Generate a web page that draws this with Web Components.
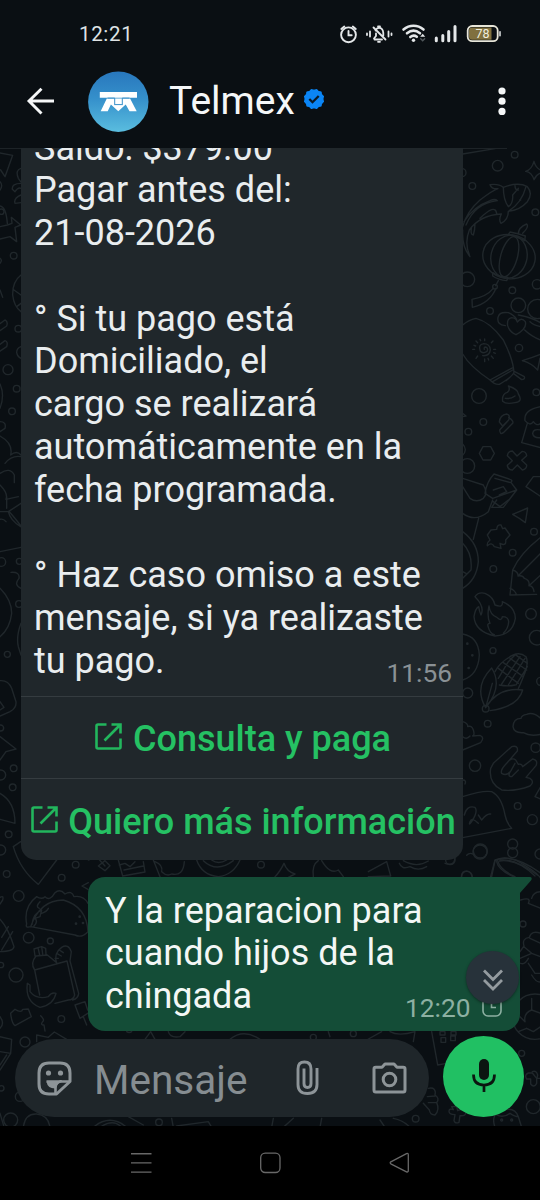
<!DOCTYPE html>
<html lang="es">
<head>
<meta charset="utf-8">
<title>Telmex</title>
<style>
html,body{margin:0;background:#000}
body{font-family:Roboto,"Noto Sans",sans-serif;color:#eceff1}
</style>
</head>
<body>
<phone-screen></phone-screen>
<script>
const define = (name, html) => {
  const t = document.createElement('template');
  t.innerHTML = html;
  customElements.define(name, class extends HTMLElement {
    constructor() {
      super();
      this.attachShadow({ mode: 'open' }).appendChild(t.content.cloneNode(true));
    }
  });
};

define('status-bar', `
<style>
:host{display:flex;align-items:center;justify-content:space-between;box-sizing:border-box;height:54px;padding:13px 37px 0 79px;color:#dfe3e5}
time{font-size:20.5px;letter-spacing:.65px;line-height:24px}
svg{display:block;width:164px;height:24px}
</style>
<time>12:21</time>
<svg viewBox="340 22 164 24" fill="none" stroke="#e4e7e9" stroke-width="1.900" stroke-linecap="round">
  <circle cx="349.500" cy="34.8" r="7.4"/><path d="M349.500 31v4.3h3.2M342.3 29l3-2.5M353.8 26.5l3 2.5"/>
  <path d="M375.5 39.5h7.5M375 38.5l2-2.5v-2.5M376.5 30.5c1-2 2-2.7 3.5-2.7 2.5 0 4 2 4.300 5v3M374.500 27.500l12 12M379 26.500h2M379 41.800h2M371 31.500v5M368 33.500v1.500M389.500 31.500v5M392.500 33.500v1.500" stroke-width="1.800"/>
  <path d="M404.500 29.500c6-5 14-5 20 0M408 33.300c4-3.200 9-3.200 13 0M411.300 37c2.200-1.700 4.600-1.700 6.500-.2" stroke-width="2.600"/>
  <circle cx="414.500" cy="40.200" r="1.700" fill="#e4e7e9" stroke="none"/>
  <path d="M421.200 36.800l2.500-3 2.500 3z" fill="#e4e7e9" stroke="none"/><path d="M421.700 38.700l2 2 2-2" stroke="#50575b" stroke-width="1.400"/>
  <path d="M437.300 38v2.700M443.800 35.500v5.200M449.700 31.500v9.200M456 26.500v14.200" stroke-width="3"/>
  <rect x="468.700" y="26" width="30" height="15.200" rx="4.500" fill="#0b1014" stroke="#e7e5d8" stroke-width="1.800"/>
  <path d="M473 27.500h19.500v12.200H473q-3 0-3-3v-6.200q0-3 3-3z" fill="#80703f" stroke="none"/>
  <path d="M501 31.700v4" stroke-width="1.500"/>
  <text x="483.500" y="38" font-family="Roboto,sans-serif" font-size="12.500" text-anchor="middle" fill="#f2efdf" stroke="none">78</text>
</svg>`);

define('chat-header', `
<style>
:host{display:flex;align-items:center;box-sizing:border-box;height:94px;padding:0 33.700px 0 26px}
svg{display:block;flex:none}
.avatar{margin-left:33px}
h1{margin:0 0 0 20px;font-size:39px;line-height:44px;font-weight:400;color:#f5f7f8}
.badge{margin:-4px 0 0 8px}
.menu{margin-left:auto}
</style>
<svg width="29" height="30" viewBox="26 86 29 30" fill="none" stroke="#f5f7f8" stroke-width="2.900"><path d="M54 101H29M41.500 88.700L29 101l12.500 12.500"/></svg>
<svg class="avatar" width="61" height="61" viewBox="88 71 61 61">
  <defs><linearGradient id="g" x1="0" y1="0" x2="0" y2="1"><stop offset="0" stop-color="#2877bd"/><stop offset=".45" stop-color="#3590cb"/><stop offset="1" stop-color="#5abddf"/></linearGradient></defs>
  <circle cx="118.300" cy="101.700" r="30.200" fill="url(#g)"/>
  <g fill="#fff"><path d="M99.800 92h37.200v5.700H99.800z"/>
  <path d="M106.800 98.600h23.300L136.700 111.300h-7.200l-3.800-6.800-7.400 6.800-7.400-6.800-3.200 6.800h-7z"/></g>
  <path d="M107.500 98.100h7.200v6.200M129.500 98.100h-7.200v6.200M114.200 104.600h8.600" fill="none" stroke="#3990c9" stroke-width="1"/>
</svg>
<h1>Telmex</h1>
<svg class="badge" width="22" height="22" viewBox="-11 -11 22 22"><g fill="#0b85f5"><circle r="9.600"/><rect x="-7.700" y="-7.700" width="15.400" height="15.400" rx="1.300"/><rect x="-7.700" y="-7.700" width="15.400" height="15.400" rx="1.300" transform="rotate(30)"/><rect x="-7.700" y="-7.700" width="15.400" height="15.400" rx="1.300" transform="rotate(60)"/></g><path d="M-4.700 0l3.200 3.200L4.700-3" fill="none" stroke="#0b1a27" stroke-width="2.300"/></svg>
<svg class="menu" width="8" height="30" viewBox="0 0 8 30" fill="#f5f7f8"><circle cx="4" cy="5" r="3.600"/><circle cx="4" cy="15.200" r="3.600"/><circle cx="4" cy="25.400" r="3.600"/></svg>`);

define('doodle-wallpaper', `
<style>:host{display:block}svg{display:block;width:540px;height:978px}</style>
<svg viewBox="0 148 540 978" fill="none" stroke="#20272b" stroke-width="4.200" stroke-linejoin="round" stroke-linecap="round">
<g transform="translate(440 140) scale(.33333)">
  <path d="M68 42L165 26"/><circle cx="224" cy="44" r="10"/><circle cx="173" cy="77" r="16"/><circle cx="97" cy="138" r="10"/><circle cx="66" cy="98" r="12"/>
  <path d="M257 94q18-5 25-30q6 23 25 28M257 94q18 2 25 25q6-17 25-22"/><circle cx="286" cy="217" r="10"/>
  <path d="M68 260Q80 215 120 180Q160 150 174 146Q155 148 150 134Q175 130 190 142Q235 125 262 140Q280 160 262 185Q240 210 205 214Q205 240 183 250Q175 240 184 222Q120 225 88 270Q72 310 90 350Q65 320 68 270M190 142Q190 180 205 200Q220 190 218 165L235 145M72 245Q100 200 150 182Q165 175 172 182Q105 190 78 255M95 260Q90 285 100 285Q105 270 105 250M120 235Q165 190 170 220M225 137Q225 150 235 150M258 140Q245 190 205 214"/><circle cx="241" cy="180" r="1"/>
  <ellipse cx="207" cy="350" rx="79" ry="66" transform="rotate(10 207 350)"/><ellipse cx="207" cy="350" rx="54" ry="65" transform="rotate(14 207 350)"/><ellipse cx="207" cy="350" rx="25" ry="62" transform="rotate(16 207 350)"/>
  <path d="M205 284Q230 290 254 302L256 288Q235 280 210 276ZM235 282Q235 262 260 252Q268 260 248 280M158 398Q180 412 204 412L200 422Q175 420 158 408ZM175 422L167 437M160 445Q140 470 96 478L97 502Q150 490 168 445"/><circle cx="165" cy="440" r="7"/>
  <circle cx="82" cy="418" r="22"/><circle cx="291" cy="433" r="14"/><circle cx="217" cy="451" r="10"/><circle cx="235" cy="496" r="22"/><circle cx="292" cy="507" r="29"/><circle cx="150" cy="513" r="10"/>
  <path d="M196 557Q170 555 174 532Q178 514 205 518Q222 525 230 538M228 584Q208 575 203 557Q200 535 215 533Q228 534 232 546Q244 530 256 545Q262 565 228 584M235 525Q285 535 304 550M254 570Q275 590 302 600M302 560Q280 555 270 545"/>
  <path d="M68 555Q85 540 108 535Q150 545 190 600Q215 650 220 682L150 720Q90 680 68 642M150 720Q165 735 178 733Q220 708 222 696L220 682M158 725L218 690M198 722L210 712M220 700L245 719Q256 718 253 710L224 695"/>
  <path d="M133 628q-2-7 4-7q9 4 4 13q-12 8-20 0q-8-20 10-23q18 0 20 18q-2 20-23 18"/><path d="M134 602v-5M134 657v8M104 628h-6M161 628h6M113 608l-5-5M154 608l5-5M113 648l-5 7M154 648l6 7M107 618l-5-2M161 638l5 2M122 602l-2-4M144 655l2 5"/>
  <circle cx="237" cy="624" r="11"/><path d="M247 662Q275 654 302 643M247 662Q275 670 293 690L300 655"/>
  <circle cx="117" cy="768" r="22"/><circle cx="289" cy="757" r="10"/><path d="M188 784Q185 762 202 757Q212 750 205 738Q235 748 235 762Q250 785 225 788Q198 794 188 784M196 775Q212 778 225 768"/>
  <circle cx="130" cy="846" r="10"/><circle cx="85" cy="875" r="10"/><path d="M178 846Q180 825 200 822Q212 825 206 840L188 858L178 846M206 832Q222 843 218 850L190 878Q180 886 179 870L204 842"/>
  <path d="M129 920h23l11 20-11 20h-23l-11-20z"/><path d="M231 948l16-14q12 1 13 13l-15 14 15 14q1 12-13 15l-15-15-15 15q-14-1-15-14l15-14-15-15q2-14 15-14z"/>
  <path d="M302 800Q250 810 255 842Q270 860 280 845Q290 860 302 850M262 850L245 908L302 923M302 870Q280 865 278 880Q280 895 302 893M65 818L78 828L68 830"/>
  <circle cx="82" cy="978" r="22"/><path d="M66 910q20 20 0 38M68 1015L130 1035Q145 1060 130 1075Q110 1090 90 1075L68 1040M162 1002Q140 1025 135 1060L158 1075L230 1050M162 1002L210 1018Q220 1020 212 1028L165 1015M215 1030L230 1050L190 1102H155L170 1080M160 1050L190 1040L200 1055L178 1065M258 1040L280 1010L300 1010M258 1040L300 1068"/>
</g>
<g transform="translate(440 500) scale(.33333)">
  <path d="M68 40Q105 68 145 35L158 0M160 5L180 20L205 0M116 55L100 118M68 95Q115 130 115 185Q110 240 68 265M68 130Q98 160 93 210L68 235M68 215L78 220"/>
  <path d="M218 43L263 24L256 68Q240 55 218 43"/><circle cx="282" cy="95" r="10"/><circle cx="218" cy="158" r="10"/><circle cx="160" cy="207" r="10"/>
  <path d="M153 90L170 88Q172 72 183 75L188 86L195 84L210 105L197 120Q200 140 180 130L183 145L163 140Q155 125 142 137Q140 128 150 120L142 105z"/>
  <path d="M218 210Q240 160 302 112M218 210L210 285L290 283M218 210Q235 215 234 228Q248 225 253 235Q270 240 267 257Q280 258 282 275M234 228L302 160M267 257L302 225M210 265Q225 270 230 285"/>
  <path d="M105 290Q115 275 135 280Q160 290 165 315Q190 325 187 305Q225 320 226 355Q218 405 165 408Q105 395 102 350Q106 325 116 320Q118 335 123 345Q135 320 105 290M147 318Q150 345 172 353Q185 365 187 350Q205 350 206 365Q205 385 190 400M147 318Q140 350 150 370Q140 370 145 382Q150 400 163 404"/>
  <circle cx="273" cy="342" r="16"/><circle cx="290" cy="413" r="22"/><circle cx="159" cy="452" r="9"/><path d="M68 402Q115 410 118 465Q115 525 68 540"/><circle cx="82" cy="431" r="2"/><circle cx="97" cy="466" r="2"/><circle cx="86" cy="504" r="2"/>
  <path d="M137 623Q100 560 155 504Q190 560 137 623M137 623Q175 560 248 570Q235 620 150 632M137 623L157 550"/><circle cx="137" cy="626" r="10"/>
  <path d="M165 515Q180 485 220 465Q240 455 258 470Q268 490 250 530Q240 555 235 565M178 555Q205 560 225 555M175 505L235 550M190 488L250 530M210 475L260 510M225 463L262 490M175 535L205 485L225 465M185 552L240 470M205 555L255 475M228 555L262 500"/>
  <circle cx="83" cy="579" r="15"/><circle cx="302" cy="544" r="12"/><circle cx="143" cy="671" r="10"/><path d="M302 655Q280 635 260 643Q245 645 243 655Q220 655 219 680Q222 700 250 698Q270 710 302 703"/>
  <path d="M68 665Q85 670 83 680Q95 675 100 690Q105 705 98 708L120 706Q135 712 122 728L68 750M68 710Q80 720 90 708"/>
  <circle cx="105" cy="797" r="17"/><circle cx="287" cy="743" r="14"/><path d="M160 790L215 740Q235 735 232 753L200 790Q215 770 227 780L235 793Q245 790 248 800L278 777Q295 780 288 797L258 832L270 835Q285 845 270 858Q225 875 185 870Q145 850 152 805zM200 790Q180 810 185 820Q200 830 213 812L225 790M213 812Q200 830 215 830L235 810"/>
  <path d="M68 840Q80 840 75 852M68 890Q130 870 155 875Q185 890 195 945Q200 970 215 985L68 1013M73 945Q80 915 105 922Q115 935 95 965Q85 980 90 965Q95 950 115 970M115 945L125 960Q140 940 152 942M302 860L285 890L302 897"/>
  <circle cx="233" cy="918" r="10"/><circle cx="277" cy="959" r="15"/><circle cx="218" cy="1032" r="15"/><circle cx="121" cy="1053" r="21"/><path d="M80 1066Q88 1057 99 1062M15 1090Q45 1100 45 1070M65 1130Q65 1113 80 1113Q95 1115 97 1130"/><circle cx="300" cy="1062" r="15"/>
  <path d="M152 1130L165 1080Q220 1060 300 1118M170 1085Q175 1110 220 1130M178 1083Q225 1075 292 1125"/>
</g>
<g transform="translate(0 140) scale(.33333)">
  <path d="M-5 38L38 46L15 110L2 90L-5 88M0 150Q10 135 0 125M63 85Q45 90 55 115L62 125M63 130Q35 130 37 148L45 155Q55 140 63 145M63 165Q40 175 45 190L63 188M0 198Q18 200 22 250M0 260L22 255L36 250L34 232L62 255L45 262L50 305L30 290L0 297"/>
  <circle cx="41" cy="347" r="10"/><circle cx="4" cy="215" r="8"/><path d="M63 405Q37 425 38 465Q42 500 63 515M42 450L63 465M50 500L63 490M0 355q8 5 0 15M0 450l8 22"/>
  <circle cx="55" cy="566" r="10"/><path d="M63 620Q50 625 50 637Q52 650 63 655M-10 558L15 540Q25 545 20 558L-5 575M-10 620L15 602Q25 605 20 620L-10 640"/>
  <circle cx="24" cy="689" r="15"/><circle cx="50" cy="746" r="10"/><circle cx="36" cy="814" r="10"/><path d="M0 732Q15 765 0 805M0 845Q20 845 15 865L0 875M0 888Q40 910 32 945Q50 930 63 945M15 970Q35 945 63 950M0 1000Q30 980 43 1005V1028M0 1035Q25 1060 18 1078L55 1070M20 1070V1105"/>
</g>
<g transform="translate(0 500) scale(.33333)">
  <path d="M0 35L25 35Q30 60 62 80M25 35L63 10M28 35Q50 60 63 78M0 58Q10 55 18 65M0 155L63 142"/><circle cx="4" cy="186" r="13"/><circle cx="58" cy="184" r="9"/>
  <path d="M33 217Q60 215 57 235Q40 255 63 265M0 265Q35 300 35 340Q30 385 0 410M63 370Q48 410 55 440L63 465"/><circle cx="57" cy="312" r="10"/><circle cx="22" cy="463" r="9"/>
  <path d="M0 542Q25 540 35 565L48 605Q50 625 30 635L0 648M0 605L12 622L0 630M0 710L48 747L18 755L0 780"/><circle cx="2" cy="684" r="9"/><circle cx="41" cy="805" r="10"/><circle cx="2" cy="825" r="15"/><circle cx="38" cy="862" r="10"/>
  <path d="M0 880Q45 905 45 970L0 958M40 1040Q60 1110 115 1153L170 1080M40 1040L62 1025"/><circle cx="26" cy="1003" r="10"/><circle cx="2" cy="1050" r="15"/><circle cx="20" cy="1122" r="10"/>
</g>
<g transform="translate(0 850) scale(.33333)">
  <circle cx="56" cy="138" r="16"/><circle cx="185" cy="83" r="10"/><circle cx="227" cy="44" r="10"/><path d="M265 30L290 20L315 48M295 48L315 32L330 47L315 62zM355 30L368 78L435 66L430 35M358 45L375 40L390 50L405 35M372 60L430 48M460 30Q470 55 480 80M465 35Q490 45 485 65Q500 80 515 72Q550 80 553 35M590 30Q605 75 655 80Q700 75 720 30M610 32Q650 70 700 32M635 30Q655 45 680 30"/><circle cx="783" cy="44" r="10"/>
  <path d="M0 142Q12 135 8 150L0 162M265 98L246 108L264 118M80 222Q70 170 110 140Q125 150 135 140Q150 155 165 128Q180 115 195 132Q215 120 222 140Q250 135 264 160M92 230Q120 150 190 150Q260 170 264 245Q245 265 225 255L92 230Q75 235 80 222M96 223Q100 190 125 180L120 200L105 205Q115 215 102 228M120 155Q105 170 118 175M125 190Q140 185 145 175"/><circle cx="239" cy="200" r="2"/><circle cx="228" cy="221" r="2"/><circle cx="249" cy="219" r="2"/>
  <path d="M0 208Q25 235 42 290Q40 305 0 305M5 262L25 230M5 300L38 245"/><circle cx="86" cy="263" r="16"/><circle cx="151" cy="273" r="9"/><circle cx="48" cy="375" r="21"/><circle cx="3" cy="345" r="8"/>
  <path d="M104 360L201 333L224 435Q220 450 205 450L165 460M104 360L119 435M104 360Q90 340 108 318L142 315L170 338M105 318L102 297L114 293L119 315M114 293L125 290L128 312M125 290L137 295L138 313M165 325L175 325M170 340Q160 310 185 292Q205 280 214 305L210 333L236 430Q235 445 218 450M170 310L184 318M178 300L190 308M82 400Q75 455 120 472Q160 465 168 430Q155 425 145 440Q110 450 90 425L90 405z"/>
  <path d="M32 490L45 478Q65 490 68 478L85 477L94 500L45 527Q35 520 32 490M225 465L255 455L263 480M225 465L240 505L263 490M250 500L260 525M122 497Q135 510 128 515Q120 525 132 525L135 543"/><circle cx="184" cy="507" r="10"/><circle cx="75" cy="576" r="15"/><path d="M0 500q15 20 0 35M0 560L35 568L32 610L0 605M32 610L0 660M20 615L0 645M110 575L110 555L145 562L163 546L200 568"/>
  <circle cx="4" cy="715" r="8"/><circle cx="60" cy="740" r="14"/><circle cx="32" cy="810" r="21"/><path d="M0 790L12 830M70 832Q75 790 110 792Q145 795 150 832M280 832Q330 790 380 832M300 832Q340 805 365 832M385 800L430 825"/><circle cx="477" cy="817" r="10"/><path d="M515 805L520 832M530 828L625 815L635 832M380 545q8 5 15 0M435 568L452 545L465 568M505 545Q510 565 540 560L555 545M690 568Q730 535 780 568"/>
</g>
<g transform="translate(270 850) scale(.33333)">
  <path d="M15 80Q30 65 42 40Q50 65 75 72L55 82M130 80Q125 45 145 32M155 32Q180 75 205 60L220 80M295 65L350 35L362 78L295 80M388 40Q395 60 420 50Q445 65 470 50M400 32Q440 55 475 33"/><circle cx="541" cy="30" r="14"/><circle cx="630" cy="6" r="21"/><circle cx="728" cy="8" r="15"/><circle cx="590" cy="80" r="16"/>
  <path d="M665 80L675 32Q700 15 740 32Q800 65 812 85M683 32Q690 60 735 80M690 30Q740 25 795 78M752 150Q785 140 775 160L812 175M812 125Q790 125 785 145"/>
  <circle cx="759" cy="222" r="9"/><path d="M812 250Q785 240 778 262Q755 265 762 288L750 305M750 325L785 310L812 320M752 340Q765 345 775 325M775 340L795 370L812 370M762 290L785 310M780 265L812 280M785 375Q800 400 812 395"/>
  <circle cx="795" cy="500" r="68"/><path d="M765 515Q760 490 785 480L812 490M770 535L790 545L812 530M785 480L785 445M750 500L765 515M745 545L770 535"/>
  <circle cx="250" cy="551" r="9"/><circle cx="130" cy="562" r="9"/><path d="M290 570L335 545M360 545Q385 560 435 545L430 575M175 545L180 560M485 545L503 645L530 640M510 545h15v10h-15zM543 545h15v10h-15zM513 563h14v14h-14zM542 558h14v14h-14z"/>
  <circle cx="755" cy="610" r="9"/><path d="M787 665q12-5 16 10l-2 10h20M800 685v15q-8 15-18 2v-15h-12q-8-12 5-18h12z"/>
  <path d="M475 715Q500 710 495 735Q510 745 500 758Q510 780 495 795Q480 795 478 780L460 760M472 740L495 738M475 758L500 758"/><circle cx="437" cy="806" r="10"/><path d="M545 770h15l3 12q25-12 25 5q0 12-18 10l-3 20q-12 5-15-5l3-18q-18 0-18-10t13-5zM675 832Q660 790 700 780Q735 770 745 800L755 832M680 795Q700 805 720 790Q735 800 745 800"/><circle cx="695" cy="810" r="3"/><circle cx="725" cy="810" r="3"/><circle cx="790" cy="770" r="21"/><path d="M10 805L5 832M40 832L70 805M150 832L155 805M330 810L345 832M370 805Q400 810 420 832"/>
</g>
</svg>`);

define('link-button', `
<style>
:host{display:flex;align-items:center;justify-content:center;box-sizing:border-box;height:82.200px;border-top:1.500px solid #353c40;color:#25c163;font-size:36px;font-weight:500;white-space:nowrap;line-height:43px;padding:5.500px 0 0 3px}
svg{display:block;flex:none;margin:-6px 10.500px 0 0}
</style>
<svg width="27" height="27" viewBox="0 0 27 27" fill="none" stroke="#22b65d" stroke-width="2.600"><path d="M11.500 1.500H3q-1.500 0-1.500 1.500v21q0 1.500 1.500 1.500h21q1.500 0 1.500-1.500V15.500M16.500 1.500h9v9M25.500 1.500L9.500 17.500"/></svg>
<span><slot></slot></span>`);

define('message-in', `
<style>
:host{display:block;flex:none;box-sizing:border-box;width:441.500px;margin:0 0 17px 21px;background:#20272b;border-radius:15px;overflow:hidden}
.body{position:relative;padding:13px 10px 12.900px 13px;font-size:36px;line-height:42.780px;white-space:pre;color:#e9edef}
time{position:absolute;right:10.500px;bottom:8px;font-size:26.300px;line-height:30px;color:#8a9195}
</style>
<div class="body"><slot></slot><time>11:56</time></div>
<slot name="actions"></slot>`);

define('message-out', `
<style>
:host{display:block;position:relative;flex:none;box-sizing:border-box;width:431.500px;height:153.500px;margin-left:88px;padding:12.600px 10px 0 17px;background:#144d37;border-radius:17px 0 17px 17px;font-size:36px;line-height:42.780px;color:#f3f7f5}
.text{white-space:pre}
.tail{position:absolute;left:431px;top:0}
.meta{position:absolute;right:18px;bottom:8px;display:flex;align-items:center;gap:11px;font-size:26.300px;line-height:30px;color:#8db0a2}
</style>
<div class="text"><slot></slot></div>
<svg class="tail" width="13" height="18" viewBox="0 0 13 18"><path d="M0 0h10.500q3.500 0 1.500 3.500L.5 16.500V18H0z" fill="#144d37"/></svg>
<div class="meta"><time>12:20</time><svg width="20" height="20" viewBox="0 0 20 20" fill="none" stroke="#8db0a2" stroke-width="1.600"><rect x="1" y="0" width="18" height="18" rx="5"/><path d="M9.500 5v4.500H14"/></svg></div>`);

define('message-composer', `
<style>
:host{display:flex;align-items:flex-end;gap:14px;padding:0 15px}
.pill{display:flex;align-items:center;box-sizing:border-box;width:414px;height:78px;padding:0 22px;border-radius:39px;background:#1f262a;color:#868d91}
.pill svg{display:block;flex:none}
span{margin:3px 0 0 22.500px;font-size:40.600px;line-height:46px}
.sticker{margin-left:-.500px}
.clip{margin-left:auto}
.cam{margin-left:53px}
.mic{display:grid;place-items:center;flex:none;width:81px;height:81px;border-radius:50%;background:#21c063}
.mic svg{margin-top:-3px}
</style>
<div class="pill">
<svg class="sticker" width="35" height="35" viewBox="0 0 35 35" fill="none" stroke="#8d9498" stroke-width="3"><path d="M33 20.500V12Q33 2 23 2H12Q2 2 2 12v11q0 10 10 10h7.500L33 20.500z" stroke-linejoin="round"/><path d="M18.500 32V27q0-6.500 6.500-6.500h8M9.500 20.500h15" stroke-width="2.600"/><path d="M9.500 20.500q1 7 8.500 7l1.500-3 4-4z" fill="#8d9498" stroke="none"/><circle cx="11.500" cy="12" r="2.600" fill="#8d9498" stroke="none"/><circle cx="23.500" cy="12" r="2.600" fill="#8d9498" stroke="none"/></svg>
<span>Mensaje</span>
<svg class="clip" width="23" height="36" viewBox="0 0 23 36" fill="none" stroke="#8d9498" stroke-width="2.900"><path d="M21 8v16.500q0 9-9.500 9t-9.500-9V9q0-7 6.500-7t6.500 7v14.500q0 4-3.500 4t-3.500-4V8.500"/></svg>
<svg class="cam" width="35" height="32" viewBox="0 0 35 32" fill="none" stroke="#8d9498" stroke-width="3"><path d="M2 7q0-1.800 1.800-1.800H10L13 2h9l3 3.200h6.200Q33 5.200 33 7v21q0 2-1.800 2H3.800Q2 30 2 28z" stroke-linejoin="round"/><circle cx="17.500" cy="17.500" r="6.300"/></svg>
</div>
<div class="mic"><svg width="24" height="33" viewBox="0 0 24 33"><rect x="7" y="0" width="10" height="21" rx="5" fill="#0b1610"/><path d="M1.500 15.500q0 10.500 10.500 10.500t10.500-10.500M12 26v7" fill="none" stroke="#0b1610" stroke-width="2.700"/></svg></div>`);

define('scroll-down', `
<style>:host{display:grid;place-items:center;width:53px;height:53px;border-radius:50%;background:#27323a;box-shadow:0 1px 3px #0006}svg{display:block;margin-top:5px}</style>
<svg width="20" height="22" viewBox="0 0 20 22" fill="none" stroke="#949b9f" stroke-width="2.800"><path d="M1 1.500l9 9 9-9M1 11l9 9 9-9"/></svg>`);

define('chat-view', `
<style>
:host{display:flex;flex-direction:column;position:relative;flex:1;min-height:0;overflow:hidden;background:#0a0f13;box-sizing:border-box;padding-bottom:9px}
doodle-wallpaper{position:absolute;left:0;top:0}
.edge{position:absolute;left:0;top:0;width:507px;height:1px;background:#1d2327}
.list{display:flex;flex-direction:column;justify-content:flex-end;position:relative;flex:1;min-height:0;overflow:hidden;margin-bottom:5.500px}
message-composer{position:relative}
scroll-down{position:absolute;left:466px;top:803px}
</style>
<doodle-wallpaper></doodle-wallpaper><div class="edge"></div>
<div class="list">
<message-in>Saldo: $379.00
Pagar antes del:
21-08-2026

° Si tu pago está
Domiciliado, el
cargo se realizará
automáticamente en la
fecha programada.

° Haz caso omiso a este
mensaje, si ya realizaste
tu pago.<link-button slot="actions">Consulta y paga</link-button><link-button slot="actions">Quiero más información</link-button></message-in>
<message-out>Y la reparacion para
cuando hijos de la
chingada</message-out>
</div>
<message-composer></message-composer>
<scroll-down></scroll-down>`);

define('nav-bar', `
<style>:host{display:flex;align-items:center;justify-content:space-between;box-sizing:border-box;height:74px;padding:0 130px;background:#000}svg{display:block}</style>
<svg width="22" height="22" viewBox="0 0 22 22" stroke="#686868" stroke-width="1.400"><path d="M1 1.700h20.500M1 10.900h20.500M1 20.100h20.500"/></svg>
<svg width="22" height="22" viewBox="0 0 22 22" fill="none" stroke="#686868" stroke-width="1.300"><rect x="1.700" y="1.200" width="19.300" height="19.300" rx="4.500"/></svg>
<svg width="22" height="22" viewBox="0 0 22 22" fill="none" stroke="#686868" stroke-width="1.300" stroke-linejoin="round"><path d="M2.800 9.800L18.500 1.600q1.800-.7 1.800 1.400v15.500q0 2-1.800 1.300L2.800 11.800q-1.200-1 0-2z"/></svg>`);

define('phone-screen', `
<style>:host{display:flex;flex-direction:column;width:540px;height:1200px;overflow:hidden;background:#0a0f13}</style>
<status-bar></status-bar><chat-header></chat-header><chat-view></chat-view><nav-bar></nav-bar>`);
</script>
</body>
</html>
